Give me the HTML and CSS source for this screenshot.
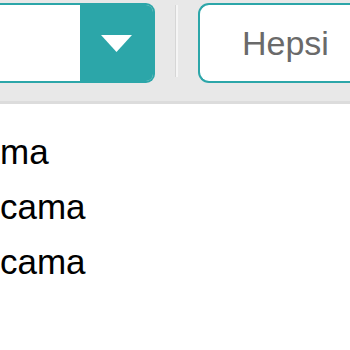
FILE: index.html
```html
<!DOCTYPE html>
<html lang="tr">
<head>
    <meta charset="UTF-8">
    <meta name="viewport" content="width=device-width, initial-scale=1.0">
    <title>Filtre</title>
    <link rel="stylesheet" href="styles.css">
</head>
<body>
    <div class="filter-bar">
        <div class="picker">
            <div class="picker-value"></div>
            <div class="picker-btn">
                <svg width="31" height="17" viewBox="0 0 31 17"><polygon points="0,0 31,0 15.5,17" fill="#fff"/></svg>
            </div>
        </div>
        <div class="divider"></div>
        <div class="search-box">Hepsi</div>
    </div>

    <ul class="results">
        <li>ma</li>
        <li>cama</li>
        <li>cama</li>
    </ul>
</body>
</html>
```

FILE: styles.css
```css
* {
    margin: 0;
    padding: 0;
    box-sizing: border-box;
}

body {
    font-family: 'Liberation Sans', Arial, sans-serif;
    background: #fff;
    overflow: hidden;
}

.filter-bar {
    display: flex;
    align-items: flex-start;
    gap: 20px;
    height: 104px;
    padding-top: 3px;
    background: #e8e8e8;
    border-bottom: 3px solid #dcdcdc;
}

.picker {
    display: flex;
    flex-shrink: 0;
    width: 155px;
    height: 80px;
    border: 2px solid #2ca6a9;
    border-left: none;
    border-radius: 0 9px 9px 0;
    overflow: hidden;
}

.picker-value {
    flex: 1;
    background: #fff;
}

.picker-btn {
    width: 73px;
    background: #2ca6a9;
    display: flex;
    align-items: center;
    justify-content: center;
}

.divider {
    flex-shrink: 0;
    width: 3px;
    height: 72px;
    margin-top: 2px;
    background: #f5f5f5;
    border-left: 1px solid #d6d6d6;
}

.search-box {
    flex: 1;
    height: 80px;
    display: flex;
    align-items: center;
    padding-left: 42px;
    background: #fff;
    border: 2px solid #2ca6a9;
    border-right: none;
    border-radius: 11px 0 0 11px;
    color: #6a6a6a;
    font-size: 34px;
    white-space: nowrap;
    overflow: hidden;
}

.results {
    list-style: none;
    padding-top: 20px;
}

.results li {
    font-size: 35px;
    line-height: 55px;
    color: #000;
    white-space: nowrap;
}
```
